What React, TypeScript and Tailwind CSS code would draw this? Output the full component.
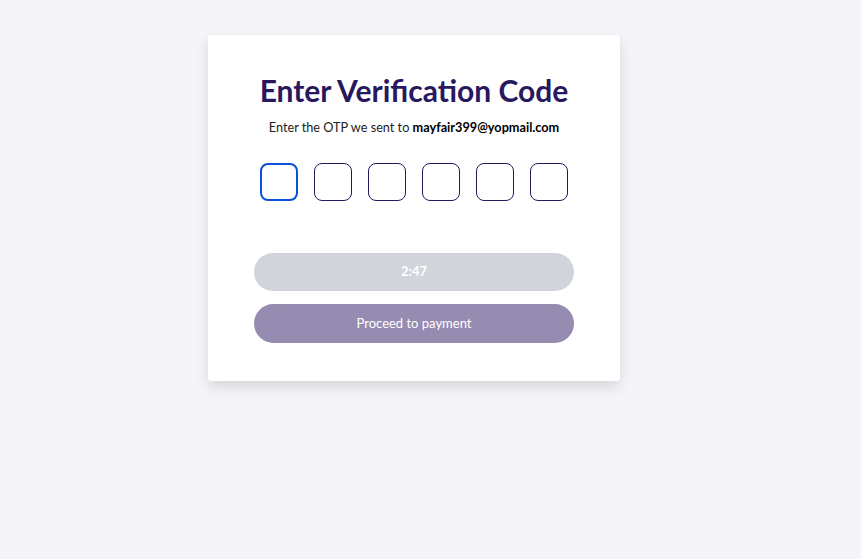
export default function App() {
  const digits = [0, 1, 2, 3, 4, 5];
  return (
    <div
      className="min-h-screen w-full bg-[#f4f4f9]"
      style={{ fontFamily: "Lato, 'Noto Sans', sans-serif" }}
    >
      <div className="flex pl-[208px] pt-[35px]">
        <div className="flex w-[412px] flex-col items-center rounded-[3px] bg-white px-[46px] pb-[38px] pt-[37px] shadow-[0_6px_14px_rgba(0,0,0,0.12)]">
          {/* Header */}
          <h1 className="whitespace-nowrap text-center text-[30px] font-bold leading-[36px] text-[#28185e]">
            Enter Verification Code
          </h1>
          <p className="mt-[10px] whitespace-nowrap text-center text-[12.7px] leading-[18px] text-[#222]">
            Enter the OTP we sent to{" "}
            <span className="font-bold text-black">mayfair399@yopmail.com</span>
          </p>

          {/* OTP inputs */}
          <div className="mt-[27px] flex gap-[16px]">
            {digits.map((d) => (
              <input
                key={d}
                maxLength={1}
                className={
                  d === 0
                    ? "h-[38px] w-[38px] rounded-[8px] border-2 border-[#0b50d8] bg-white text-center outline-none"
                    : "h-[38px] w-[38px] rounded-[8px] border border-[#28185e] bg-white text-center outline-none"
                }
              />
            ))}
          </div>

          {/* Actions */}
          <button className="mt-[52px] h-[38px] w-[320px] rounded-full bg-[#d1d5db] text-[13px] font-bold text-white">
            2:47
          </button>
          <button className="mt-[13px] h-[39px] w-[320px] rounded-full bg-[#968bb1] text-[13px] text-white">
            Proceed to payment
          </button>
        </div>
      </div>
    </div>
  );
}
